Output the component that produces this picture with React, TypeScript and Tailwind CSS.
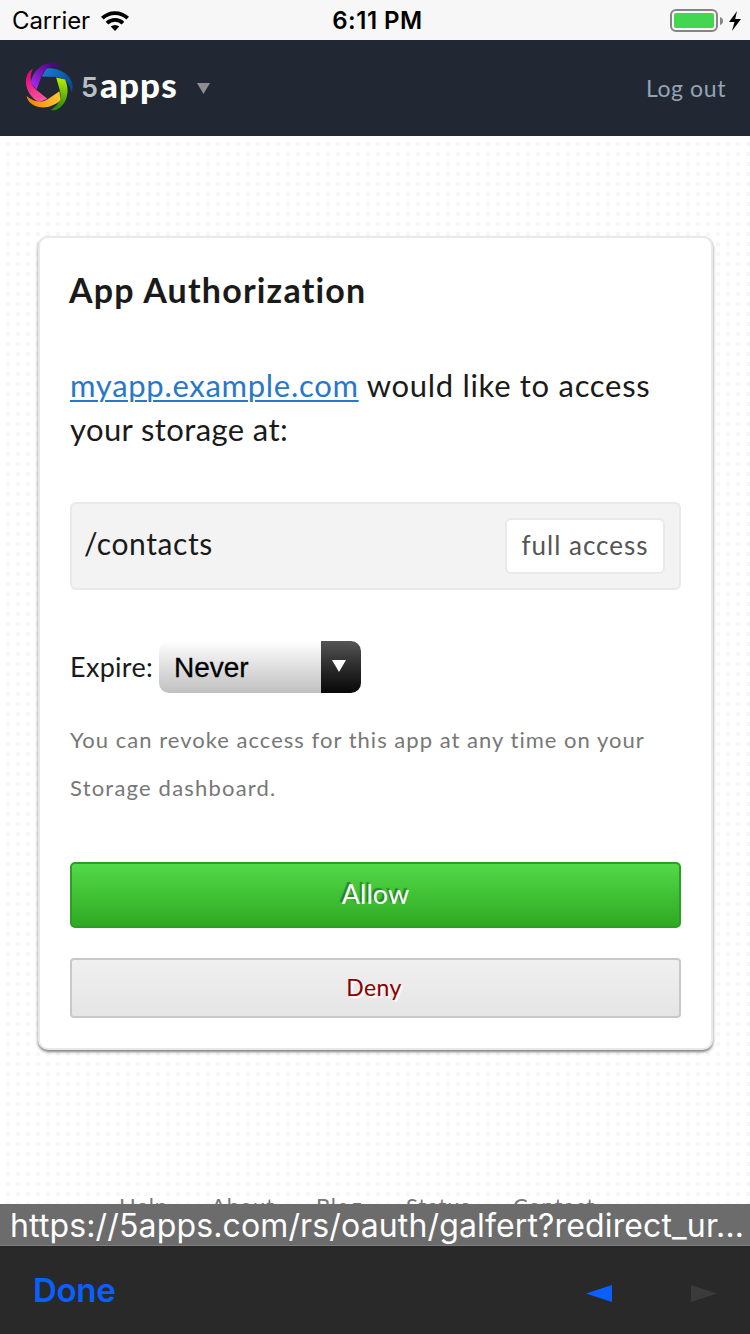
const ribbonShape =
  "M66 61 L80 38 C118 32 155 58 158 88 C158 98 156 104 154 108 C150 88 138 66 110 63 Z";

const ribbons = [
  { angle: 0, from: "#1a78d2", to: "#084c98" },
  { angle: 72, from: "#b6f000", to: "#2f8a12" },
  { angle: 144, from: "#ffc933", to: "#f28a0c" },
  { angle: -144, from: "#ff5aa2", to: "#e00d77" },
  { angle: -72, from: "#a32af2", to: "#4b067d" },
];

function Logo() {
  return (
    <svg className="h-[60px] w-[60px] shrink-0" viewBox="0 0 180 180">
      <defs>
        {ribbons.map((r, i) => (
          <linearGradient key={i} id={`ribbon${i}`} gradientUnits="userSpaceOnUse" x1="70" y1="50" x2="150" y2="90">
            <stop offset="0" stopColor={r.from} />
            <stop offset="1" stopColor={r.to} />
          </linearGradient>
        ))}
        <clipPath id="ribbonStart">
          <rect x="50" y="20" width="46" height="60" />
        </clipPath>
      </defs>
      {ribbons.map((r, i) => (
        <path key={i} transform={`rotate(${r.angle} 85 92)`} fill={`url(#ribbon${i})`} d={ribbonShape} />
      ))}
      <path clipPath="url(#ribbonStart)" fill="url(#ribbon0)" d={ribbonShape} />
    </svg>
  );
}

function StatusBar() {
  return (
    <div className="grid h-10 grid-cols-3 items-center bg-[#f7f7f7] font-[Inter,sans-serif] text-black">
      <div className="flex items-center pl-3">
        <span className="pt-px text-[24px] leading-10 tracking-[-0.1px]">Carrier</span>
        <svg className="ml-[11px] h-[20px] w-[28px]" viewBox="0 0 28 20" fill="none" stroke="#000" strokeWidth="3.8">
          <path d="M1.3 7.2a18.2 18.2 0 0 1 25.4 0" />
          <path d="M6 12.1a11.5 11.5 0 0 1 16 0" />
          <path d="M14 20l-4.2-4.4a6 6 0 0 1 8.4 0z" fill="#000" stroke="none" />
        </svg>
      </div>
      <div className="whitespace-nowrap pl-[5px] pt-px text-center text-[24px] font-semibold leading-10 tracking-[0.5px]">6:11 PM</div>
      <div className="flex items-center justify-end pr-[9px]">
        <div className="h-[23px] w-12 rounded-[6px] border-2 border-[#858585] p-[2px]">
          <div className="h-full w-full rounded-[2px] bg-[#43d651]" />
        </div>
        <svg className="ml-[2px] h-2 w-[3px]" viewBox="0 0 3 8">
          <path d="M0 0Q3 1 3 4T0 8z" fill="#858585" />
        </svg>
        <svg className="ml-[6px] h-5 w-3" viewBox="0 0 12 20">
          <path d="M8 0L0 11H5.5L3 20L12 8H6.2z" />
        </svg>
      </div>
    </div>
  );
}

function Header() {
  return (
    <header className="flex h-24 items-center bg-[#212833] pl-[19px] pr-6">
      <div className="pb-1 pl-px">
        <Logo />
      </div>
      <div className="flex items-center pb-[9px] leading-10">
        <span className="ml-px w-[19px] pt-[9px] font-[Inter,sans-serif] text-[27px] font-semibold text-[#b9c0c4]">5</span>
        <span className="w-[79px] font-[Lato,sans-serif] text-[35px] font-black tracking-[1.1px] text-white">apps</span>
      </div>
      <svg className="ml-[18px] h-[11px] w-[13px]" viewBox="0 0 13 11">
        <path d="M0 0H13L6.5 11z" fill="#8e8e8e" />
      </svg>
      <a className="ml-auto text-[23px] leading-10 tracking-[0.6px] text-[#94a3b5]">Log out</a>
    </header>
  );
}

export default function App() {
  return (
    <div className="flex h-[1334px] w-[750px] flex-col overflow-hidden bg-white font-[Lato,sans-serif] text-[#1a1a1a]">
      <StatusBar />
      <Header />
      <main className="flex h-[1068px] shrink-0 flex-col overflow-hidden bg-[linear-gradient(90deg,#fff_6px,transparent_6px),linear-gradient(#fff_6px,#f7f7f7_6px)] bg-[size:10px_10px] pt-[100px]">
        <section className="ml-[38px] h-[814px] w-[675px] shrink-0 rounded-[10px] border-2 border-[#e9e9e9] bg-white px-[30px] pt-[32px] shadow-[0_2px_3px_rgba(0,0,0,0.5)]">
          <h1 className="ml-[-1px] text-[34px] font-bold leading-10 tracking-[1.2px]">App Authorization</h1>
          <p className="mt-[53px] whitespace-nowrap text-[31px] leading-[44px] tracking-[0.7px]">
            <a className="text-[#2878c8] underline decoration-2 underline-offset-[3px]">myapp.example.com</a> would like to access
            <br />
            <span className="tracking-[0.4px]">your storage at:</span>
          </p>
          <div className="mt-[51px] flex h-[88px] items-center justify-between rounded-[6px] border-2 border-[#e9e9e9] bg-[#f3f3f3] pl-[12px] pr-[14px]">
            <span className="pb-[6px] text-[30px] leading-10 tracking-[0.6px]">/contacts</span>
            <span className="flex h-14 w-40 items-center justify-center rounded-[6px] border-2 border-[#e9e9e9] bg-white pb-[2px] text-[26px] tracking-[1px] text-[#555]">
              full access
            </span>
          </div>
          <div className="mt-[51px] flex h-[52px] items-center">
            <span className="w-[89px] whitespace-nowrap text-[27px] tracking-[0.3px]">Expire:</span>
            <div className="flex h-[52px] w-[202px] overflow-hidden rounded-[10px]">
              <div className="flex flex-1 items-center bg-linear-to-b from-white to-[#c0c0c0] pl-[15px] pt-[2px] font-['Liberation_Sans',sans-serif] text-[28px] text-black [-webkit-text-stroke:0.3px_#000]">
                Never
              </div>
              <div className="flex w-10 items-center bg-linear-to-b from-[#555] to-[#080808] pb-[3px] pl-[11px]">
                <svg className="h-3 w-[14px]" viewBox="0 0 14 12">
                  <path d="M0 0H14L7 12z" fill="#fff" />
                </svg>
              </div>
            </div>
          </div>
          <p className="mt-[23px] whitespace-nowrap text-[22px] leading-[48px] tracking-[1.02px] text-[#777]">
            You can revoke access for this app at any time on your
            <br />
            <span className="tracking-[1.2px]">Storage dashboard.</span>
          </p>
          <button className="mt-[50px] block h-[66px] w-full rounded-[5px] border-2 border-[#2c9e26] bg-linear-to-b from-[#52da48] to-[#2fa922] pb-px text-[27px] text-white [text-shadow:-2px_-2px_1px_rgba(0,0,0,0.35)]">
            Allow
          </button>
          <button className="mt-[30px] block h-[60px] w-full rounded-[4px] border-2 border-[#c8c8c8] bg-linear-to-b from-[#f0f0f0] to-[#e5e5e5] pb-px pr-[3px] text-[23px] tracking-[0.4px] text-[#8b0000] [text-shadow:2px_2px_1px_#fff]">
            Deny
          </button>
        </section>
        <footer className="mt-[141px] flex h-10 shrink-0 whitespace-nowrap text-[22px] leading-[30px] tracking-[0.8px] text-[#777]">
          <a className="ml-[119px] w-[92px]">Help</a>
          <a className="w-[105px]">About</a>
          <a className="w-[90px]">Blog</a>
          <a className="w-[107px]">Status</a>
          <a>Contact</a>
        </footer>
      </main>
      <div className="h-[42px] shrink-0 whitespace-nowrap border-b border-[#7d7d7d] bg-[#6c6c6c] pl-[10px] font-[Inter,sans-serif] text-[32px] leading-[43px] tracking-[0.14px] text-white">
        https://5apps.com/rs/oauth/galfert?redirect_ur...
      </div>
      <nav className="flex h-[88px] shrink-0 items-center bg-[#292929] pl-[33px] pr-[33px]">
        <button className="pt-[2px] font-[Inter,sans-serif] text-[33px] font-semibold tracking-[-0.3px] text-[#0a60ff]">Done</button>
        <svg className="ml-auto mt-[6px] h-[17px] w-[26px]" viewBox="0 0 26 17">
          <path d="M26 0V17L0 8.5z" fill="#0a60ff" />
        </svg>
        <svg className="ml-[79px] mt-[6px] h-[17px] w-[26px]" viewBox="0 0 26 17">
          <path d="M0 0V17L26 8.5z" fill="#3b3b3b" />
        </svg>
      </nav>
    </div>
  );
}
